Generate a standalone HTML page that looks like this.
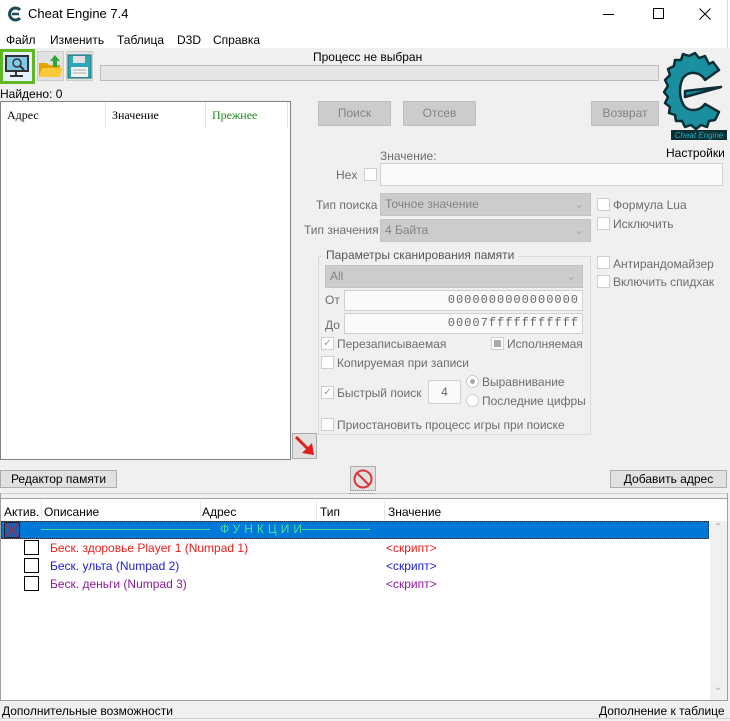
<!DOCTYPE html>
<html><head><meta charset="utf-8"><style>
*{margin:0;padding:0;box-sizing:border-box}
body{width:730px;height:721px;background:#f0f0f0;font-family:"Liberation Sans","DejaVu Sans",sans-serif;font-size:12px;color:#000;position:relative;overflow:hidden}
.a{position:absolute;white-space:nowrap}
.btn{position:absolute;background:#e1e1e1;border:1px solid #adadad;text-align:center}
.dis{background:#cccccc;border:1px solid #bfbfbf;color:#838383}
.cbd{position:absolute;width:13px;height:13px;border:1px solid #cfcfcf;background:#fff}
.g{color:#6d6d6d}
.combo{position:absolute;background:#cccccc;border:1px solid #c4c4c4;color:#838383;padding-left:4px}
.inp{position:absolute;background:#fafafa;border:1px solid #d0d0d0}
.sep{position:absolute;width:1px;background:#e5e5e5}
</style></head><body>
<div class="a" style="left:0;top:0;width:730px;height:48px;background:#fff"></div>
<svg class="a" style="left:7px;top:6px" width="16" height="16" viewBox="0 0 16 16"><path d="M13 4 A6 6 0 1 0 13 12" fill="none" stroke="#1f4b5a" stroke-width="3"/><path d="M5 8 H12" stroke="#1f4b5a" stroke-width="2.5"/></svg>
<div class="a" style="left:28px;top:6px;font-size:13px">Cheat Engine 7.4</div>
<div class="a" style="left:603px;top:14px;width:11px;height:1px;background:#000"></div>
<div class="a" style="left:653px;top:8px;width:11px;height:11px;border:1px solid #000"></div>
<svg class="a" style="left:699px;top:8px" width="12" height="12"><path d="M0.5 0.5L11.5 11.5M11.5 0.5L0.5 11.5" stroke="#000" stroke-width="1"/></svg>
<div class="a" style="left:6px;top:33px">Файл</div>
<div class="a" style="left:50px;top:33px">Изменить</div>
<div class="a" style="left:117px;top:33px">Таблица</div>
<div class="a" style="left:177px;top:33px">D3D</div>
<div class="a" style="left:213px;top:33px">Справка</div>
<div class="a" style="left:727px;top:0;width:1px;height:48px;background:#ddd"></div>
<div class="a" style="left:0;top:49px;width:35px;height:35px;background:#e5f1fb;border:3px solid #5fb823"></div>
<svg class="a" style="left:5px;top:55px" width="26" height="24" viewBox="0 0 26 24"><rect x="1" y="1" width="22" height="15" fill="#7fc9e8" stroke="#333" stroke-width="2"/><circle cx="12" cy="8" r="4" fill="none" stroke="#333" stroke-width="1.5"/><path d="M15 11 L19 15" stroke="#333" stroke-width="2"/><path d="M11 16 V20 M5 21 H18" stroke="#333" stroke-width="2"/></svg>
<div class="a" style="left:37px;top:51px;width:27px;height:30px;background:#e1e1e1;border:1px solid #ccc"></div>
<svg class="a" style="left:38px;top:53px" width="26" height="26" viewBox="0 0 26 26"><path d="M1 10 H9 L11 12 H22 V24 H1 Z" fill="#e3a400"/><path d="M4 15 H25 L22 24 H1 Z" fill="#fcc93a"/><path d="M17 2 L22 8 H19 V14 H15 V8 H12 Z" fill="#2aa838"/></svg>
<div class="a" style="left:66px;top:51px;width:27px;height:30px;background:#e1e1e1;border:1px solid #ccc"></div>
<svg class="a" style="left:67px;top:54px" width="25" height="25" viewBox="0 0 25 25"><rect x="1" y="1" width="23" height="23" fill="#2fa7b5" stroke="#1f6b78"/><rect x="6" y="2" width="12" height="7" fill="#e0e0e0"/><rect x="4" y="13" width="17" height="10" fill="#f2f2f2"/><path d="M6 16H19M6 19H19" stroke="#aaa"/></svg>
<div class="a" style="left:313px;top:50px">Процесс не выбран</div>
<div class="a" style="left:100px;top:65px;width:559px;height:16px;background:#e6e6e6;border:1px solid #bcbcbc"></div>
<div class="a" style="left:0;top:87px">Найдено: 0</div>
<!-- logo -->
<svg class="a" style="left:663px;top:50px" width="64" height="92" viewBox="0 0 64 92">
<g fill="#1a8fa0" stroke="#0c2e35" stroke-width="2.5" stroke-linejoin="round">
<path d="M56 20 L50 12 L46 14 L42 6 L36 8 L32 3 L26 6 L20 4 L18 10 L12 10 L11 16 L5 19 L7 25 L2 30 L5 36 L1 42 L5 47 L2 53 L7 57 L6 63 L12 65 L13 71 L19 71 L22 77 L28 75 L33 79 L38 75 L44 77 L46 71 L52 70 L56 62 L42 54 C36 62 24 62 20 54 C16 46 16 36 20 28 C26 20 38 22 42 30 Z"/>
<path d="M22 41 L58 37 L22 47 Z"/>
</g>
<rect x="8" y="80" width="56" height="10" fill="#0c2e35"/>
<text x="36" y="88" font-family="Liberation Sans" font-size="8" font-style="italic" fill="#1fb0c0" text-anchor="middle">Cheat Engine</text></svg>
<div class="a" style="left:666px;top:146px">Настройки</div>
<div class="a" style="left:0;top:101px;width:291px;height:359px;background:#fff;border:1px solid #828282"></div>
<div class="a" style="left:7px;top:108px;font-family:'Liberation Serif',serif">Адрес</div>
<div class="a" style="left:112px;top:108px;font-family:'Liberation Serif',serif">Значение</div>
<div class="a" style="left:212px;top:108px;color:#1f8b1f;font-family:'Liberation Serif',serif">Прежнее</div>
<div class="sep" style="left:105px;top:102px;height:26px"></div>
<div class="sep" style="left:205px;top:102px;height:26px"></div>
<div class="sep" style="left:287px;top:102px;height:26px"></div>
<div class="btn dis" style="left:318px;top:101px;width:73px;height:25px;line-height:23px">Поиск</div>
<div class="btn dis" style="left:403px;top:101px;width:73px;height:25px;line-height:23px">Отсев</div>
<div class="btn dis" style="left:591px;top:101px;width:68px;height:25px;line-height:23px">Возврат</div>
<div class="a g" style="left:380px;top:149px">Значение:</div>
<div class="a g" style="left:336px;top:168px">Hex</div>
<div class="cbd" style="left:364px;top:168px"></div>
<div class="inp" style="left:380px;top:163px;width:343px;height:23px"></div>
<div class="a g" style="left:316px;top:198px">Тип поиска</div>
<div class="combo" style="left:380px;top:193px;width:211px;height:23px;line-height:21px">Точное значение<span style="position:absolute;right:6px;color:#aaa">&#8964;</span></div>
<div class="a g" style="left:304px;top:223px">Тип значения</div>
<div class="combo" style="left:380px;top:219px;width:211px;height:23px;line-height:21px">4 Байта<span style="position:absolute;right:6px;color:#aaa">&#8964;</span></div>
<div class="cbd" style="left:597px;top:198px"></div><div class="a g" style="left:613px;top:198px">Формула Lua</div>
<div class="cbd" style="left:597px;top:217px"></div><div class="a g" style="left:613px;top:217px">Исключить</div>
<div class="cbd" style="left:597px;top:256px"></div><div class="a g" style="left:613px;top:257px">Антирандомайзер</div>
<div class="cbd" style="left:597px;top:275px"></div><div class="a g" style="left:613px;top:275px">Включить спидхак</div>
<div class="a" style="left:318px;top:256px;width:273px;height:179px;border:1px solid #dcdcdc"></div>
<div class="a g" style="left:322px;top:248px;background:#f0f0f0;padding:0 4px;color:#555">Параметры сканирования памяти</div>
<div class="combo" style="left:325px;top:265px;width:258px;height:23px;line-height:21px">All<span style="position:absolute;right:6px;color:#aaa">&#8964;</span></div>
<div class="a g" style="left:325px;top:293px">От</div>
<div class="inp" style="left:344px;top:290px;width:239px;height:21px;text-align:right;padding-right:3px;line-height:19px;font-family:'Liberation Mono',monospace;color:#666;letter-spacing:1px">0000000000000000</div>
<div class="a g" style="left:325px;top:318px">До</div>
<div class="inp" style="left:344px;top:313px;width:239px;height:21px;text-align:right;padding-right:3px;line-height:19px;font-family:'Liberation Mono',monospace;color:#666;letter-spacing:1px">00007fffffffffff</div>
<div class="cbd" style="left:321px;top:337px;color:#999;font-size:10px;line-height:11px;text-align:center">&#10003;</div><div class="a g" style="left:337px;top:337px">Перезаписываемая</div>
<div class="cbd" style="left:491px;top:337px"><div style="margin:2px;width:7px;height:7px;background:#aaa"></div></div><div class="a g" style="left:507px;top:337px">Исполняемая</div>
<div class="cbd" style="left:321px;top:356px"></div><div class="a g" style="left:337px;top:356px">Копируемая при записи</div>
<div class="cbd" style="left:321px;top:386px;color:#999;font-size:10px;line-height:11px;text-align:center">&#10003;</div><div class="a g" style="left:337px;top:386px">Быстрый поиск</div>
<div class="inp" style="left:428px;top:380px;width:33px;height:24px;text-align:center;line-height:22px;color:#666">4</div>
<div class="a" style="left:466px;top:375px;width:13px;height:13px;border-radius:50%;border:1px solid #ccc;background:#fff"><div style="margin:3px;width:5px;height:5px;border-radius:50%;background:#aaa"></div></div><div class="a g" style="left:482px;top:375px">Выравнивание</div>
<div class="a" style="left:466px;top:394px;width:13px;height:13px;border-radius:50%;border:1px solid #ccc;background:#fff"></div><div class="a g" style="left:482px;top:394px">Последние цифры</div>
<div class="cbd" style="left:321px;top:418px"></div><div class="a g" style="left:337px;top:418px">Приостановить процесс игры при поиске</div>
<div class="btn" style="left:292px;top:433px;width:25px;height:26px"></div>
<svg class="a" style="left:294px;top:435px" width="22" height="22" viewBox="0 0 22 22"><path d="M2 2 L15 15" stroke="#e0201c" stroke-width="3"/><path d="M20 20 L8 18 L18 8 Z" fill="#e0201c"/></svg>
<div class="btn" style="left:0;top:470px;width:117px;height:18px;line-height:16px">Редактор памяти</div>
<div class="btn" style="left:350px;top:466px;width:26px;height:25px"></div>
<svg class="a" style="left:352px;top:468px" width="22" height="22"><circle cx="11" cy="11" r="8.5" fill="none" stroke="#d9363e" stroke-width="2"/><path d="M5 5 L17 17" stroke="#d9363e" stroke-width="2"/></svg>
<div class="btn" style="left:610px;top:470px;width:117px;height:18px;line-height:16px">Добавить адрес</div>
<div class="a" style="left:0;top:493px;width:728px;height:6px;border:1px solid #a0a0a0;border-top-color:#ccc;background:#f0f0f0"></div>
<div class="a" style="left:349px;top:493px;width:26px;height:2px;border-top:1px dotted #999"></div>
<div class="a" style="left:0;top:499px;width:728px;height:202px;background:#fff;border:1px solid #a0a0a0;border-top:none"></div>
<div class="a" style="left:4px;top:505px">Актив.</div>
<div class="a" style="left:44px;top:505px">Описание</div>
<div class="a" style="left:202px;top:505px">Адрес</div>
<div class="a" style="left:320px;top:505px">Тип</div>
<div class="a" style="left:388px;top:505px">Значение</div>
<div class="sep" style="left:41px;top:501px;height:19px"></div>
<div class="sep" style="left:200px;top:501px;height:19px"></div>
<div class="sep" style="left:316px;top:501px;height:19px"></div>
<div class="sep" style="left:384px;top:501px;height:19px"></div>
<div class="a" style="left:1px;top:521px;width:708px;height:18px;background:#0078d7;border:1px dotted #223"></div>
<div class="a" style="left:4px;top:522px;width:16px;height:16px;border:1px solid #223;background:#1f5ea8"></div>
<svg class="a" style="left:5px;top:523px" width="14" height="14"><path d="M0 0L14 14M14 0L0 14" stroke="#c02040" stroke-width="1"/></svg>
<div class="a" style="left:41px;top:529px;width:169px;height:1px;background:#40e0a0"></div>
<div class="a" style="left:302px;top:529px;width:68px;height:1px;background:#40e0a0"></div>
<div class="a" style="left:220px;top:522px;color:#40e0a0;letter-spacing:4px">ФУНКЦИИ</div>
<div class="a" style="left:24px;top:540px;width:15px;height:15px;border:1px solid #000"></div>
<div class="a" style="left:50px;top:541px;color:#e8201c">Беск. здоровье Player 1 (Numpad 1)</div>
<div class="a" style="left:386px;top:541px;color:#e8201c">&lt;скрипт&gt;</div>
<div class="a" style="left:24px;top:558px;width:15px;height:15px;border:1px solid #000"></div>
<div class="a" style="left:50px;top:559px;color:#2020d0">Беск. ульта (Numpad 2)</div>
<div class="a" style="left:386px;top:559px;color:#2020d0">&lt;скрипт&gt;</div>
<div class="a" style="left:24px;top:576px;width:15px;height:15px;border:1px solid #000"></div>
<div class="a" style="left:50px;top:577px;color:#8a1a9a">Беск. деньги (Numpad 3)</div>
<div class="a" style="left:386px;top:577px;color:#8a1a9a">&lt;скрипт&gt;</div>
<div class="a" style="left:710px;top:521px;width:17px;height:179px;background:#f0f0f0"></div>
<div class="a" style="left:714px;top:522px;color:#aaa;font-size:10px">&#8963;</div>
<div class="a" style="left:714px;top:682px;color:#aaa;font-size:10px">&#8964;</div>
<div class="a" style="left:2px;top:704px">Дополнительные возможности</div>
<div class="a" style="left:599px;top:704px">Дополнение к таблице</div>
<div class="a" style="left:0;top:718px;width:730px;height:3px;border-top:1px solid #d0d0d0"></div>
</body></html>
